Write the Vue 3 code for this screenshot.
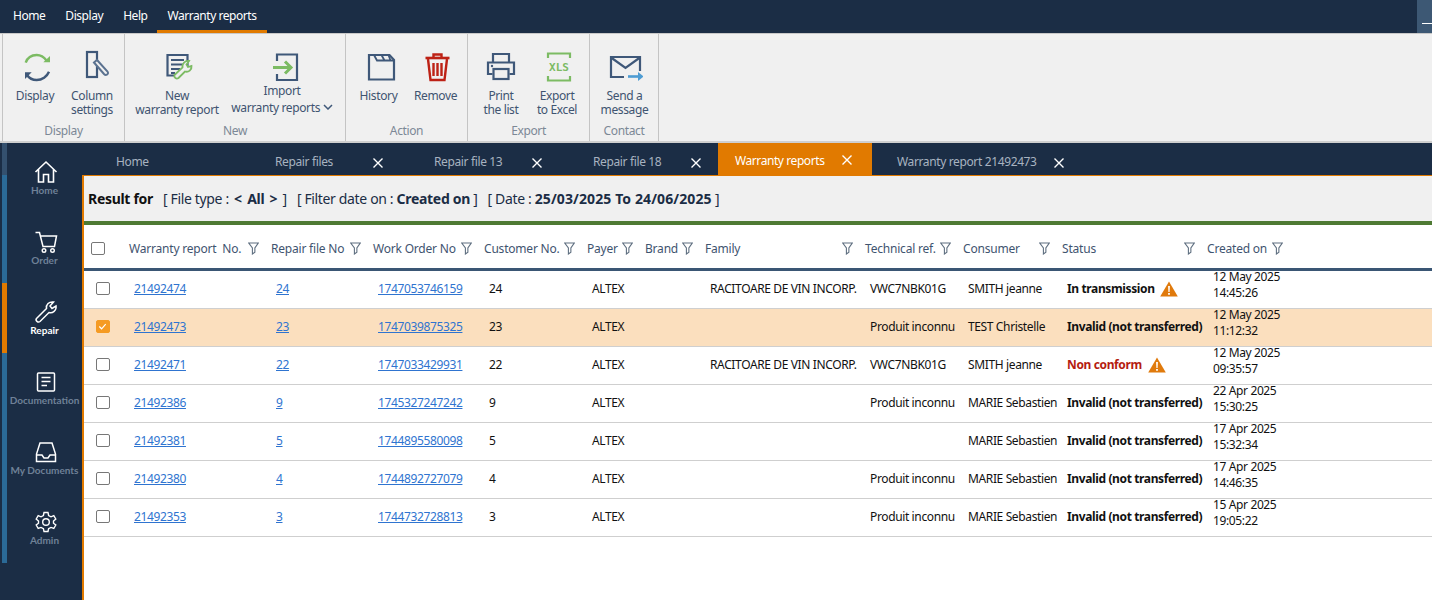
<script setup>
const menu = ['Home', 'Display', 'Help', 'Warranty reports']
const tabs = [
  { t: 'Home', c: 't0' },
  { t: 'Repair files', c: 't1', x: 1 },
  { t: 'Repair file 13', c: 't1', x: 1 },
  { t: 'Repair file 18', c: 't2', x: 1 },
  { t: 'Warranty reports', c: 'ta', x: 1 },
  { t: 'Warranty report 21492473', c: 't3', x: 1 }
]
const heads = [
  { t: 'Warranty report  No.', c: '' }, { t: 'Repair file No', c: '' }, { t: 'Work Order No', c: '' },
  { t: 'Customer No.', c: '' }, { t: 'Payer', c: '' }, { t: 'Brand', c: '' }, { t: 'Family', c: '' },
  { t: 'Technical ref.', c: '' }, { t: 'Consumer', c: '' }, { t: 'Status', c: '' }, { t: 'Created on', c: 'last' }
]
const U = 'Produit inconnu'
const I = 'Invalid (not transferred)'
const R = 'RACITOARE DE VIN INCORP.'
const V = 'VWC7NBK01G'
const rows = [
  ['21492474', '24', '1747053746159', R, V, 'SMITH jeanne', 'In transmission', '12 May 2025', '14:45:26', 'warn'],
  ['21492473', '23', '1747039875325', '', U, 'TEST Christelle', I, '12 May 2025', '11:12:32', 'sel'],
  ['21492471', '22', '1747033429931', R, V, 'SMITH jeanne', 'Non conform', '12 May 2025', '09:35:57', 'bad'],
  ['21492386', '9', '1745327247242', '', U, 'MARIE Sebastien', I, '22 Apr 2025', '15:30:25', ''],
  ['21492381', '5', '1744895580098', '', '', 'MARIE Sebastien', I, '17 Apr 2025', '15:32:34', ''],
  ['21492380', '4', '1744892727079', '', U, 'MARIE Sebastien', I, '17 Apr 2025', '14:46:35', ''],
  ['21492353', '3', '1744732728813', '', U, 'MARIE Sebastien', I, '15 Apr 2025', '19:05:22', '']
]
</script>

<template>
  <div class="app">
    <header class="menubar">
      <span v-for="m in menu" :key="m" class="menu-item" :class="{ on: m === 'Warranty reports' }">{{ m }}</span>
      <span class="corner"><i></i></span>
    </header>

    <section class="ribbon">
      <div class="group g1">
        <div class="btns">
          <div class="btn w56">
            <svg class="ic" viewBox="0 0 36 36" fill="none">
              <path d="M8.700 14.700C10.500 9.500 15 7 19.700 7C24 7 27 9 29.500 12.500" stroke="#7cbb63" stroke-width="2.400"/>
              <path d="M33 8V14.300H26.300Z" fill="#7cbb63"/>
              <path d="M32 23.700C30 28.500 25 32 19.700 32C15.500 32 12 30 10 27" stroke="#3f5879" stroke-width="2.400"/>
              <path d="M8 31V24.300H14.700Z" fill="#3f5879"/>
            </svg>
            <span>Display</span>
          </div>
          <div class="btn w56 col">
            <svg class="ic" viewBox="0 0 36 36" fill="none">
              <rect x="13" y="4" width="10" height="25" stroke="#3f5879" stroke-width="2.200"/>
              <path d="M20 14.500L23 12L33.500 23.500C34.500 25 34 26 33 26.500C32 27.200 31 27 30 26Z" fill="#f0f0f0" stroke="#5b7290" stroke-width="2"/>
            </svg>
            <span>Column<br>settings</span>
          </div>
        </div>
        <div class="glabel">Display</div>
      </div>
      <div class="group g2">
        <div class="btns">
          <div class="btn new">
            <svg class="ic" viewBox="0 0 36 36" fill="none">
              <path d="M28.500 20V7H8.500V27.500H17" stroke="#3f5879" stroke-width="2.200"/>
              <path d="M12 12H25M12 16.500H25M12 21H21M12 25H16" stroke="#3f5879" stroke-width="1.800"/>
              <path d="M15.500 27L23.500 19.500C23 15.500 26 12.500 30 13L27.500 16.500L29 19L32.500 18C33 22 29.500 24.500 26 23.500L19.500 30C17.500 31.500 14.500 29.500 15.500 27Z" fill="#f0f0f0" stroke="#7cbb63" stroke-width="1.800"/>
            </svg>
            <span>New<br>warranty report</span>
          </div>
          <div class="btn imp">
            <svg class="ic" viewBox="0 0 36 36" fill="none">
              <path d="M13 13V6.500H33V32H13V26" stroke="#3f5879" stroke-width="2.200"/>
              <path d="M9 19.500H25" stroke="#7cbb63" stroke-width="3"/>
              <path d="M21 13.500L27 19.500L21 25.500" stroke="#7cbb63" stroke-width="3"/>
            </svg>
            <span>Import<br>warranty reports
              <svg class="chev" viewBox="0 0 10 6" fill="none"><path d="M1 1L5 5L9 1" stroke="#3f5879" stroke-width="1.500"/></svg>
            </span>
          </div>
        </div>
        <div class="glabel">New</div>
      </div>
      <div class="group g3">
        <div class="btns">
          <div class="btn w57">
            <svg class="ic" viewBox="0 0 36 36" fill="none">
              <path d="M8 31.500V7H28.500L33 12V31.500Z" stroke="#3f5879" stroke-width="2.200"/>
              <path d="M13 7L16 12.500H33M20.500 7L23.500 12.500M27.500 7L29.500 12.500" stroke="#3f5879" stroke-width="1.800"/>
            </svg>
            <span>History</span>
          </div>
          <div class="btn w57">
            <svg class="ic" viewBox="0 0 36 36" fill="none">
              <g transform="translate(1.500 0)">
                <path d="M6 10H30" stroke="#bd2115" stroke-width="2.600"/>
                <path d="M14 9V6.500H22V9" stroke="#bd2115" stroke-width="2.400"/>
                <path d="M8.500 11L11 32H25L27.500 11" stroke="#bd2115" stroke-width="2.400"/>
                <path d="M14 15V28M18 15V28M22 15V28" stroke="#bd2115" stroke-width="2.400"/>
              </g>
            </svg>
            <span>Remove</span>
          </div>
        </div>
        <div class="glabel">Action</div>
      </div>
      <div class="group g4">
        <div class="btns">
          <div class="btn w56">
            <svg class="ic" viewBox="0 0 36 36" fill="none">
              <path d="M10 14V6H26V14M9.500 26H5V14.500H31V26H26.500" stroke="#3f5879" stroke-width="2.200"/>
              <rect x="10.500" y="21" width="15" height="10" stroke="#3f5879" stroke-width="2.200"/>
              <circle cx="9" cy="18" r="1.200" fill="#3f5879"/>
            </svg>
            <span>Print<br>the list</span>
          </div>
          <div class="btn w56">
            <svg class="ic" viewBox="0 0 36 36" fill="none">
              <path d="M9 10V5.500H31V10M9 28V32.500H31V28" stroke="#7cbb63" stroke-width="2.200"/>
              <text x="20" y="23" text-anchor="middle" class="xls">XLS</text>
            </svg>
            <span>Export<br>to Excel</span>
          </div>
        </div>
        <div class="glabel">Export</div>
      </div>
      <div class="group g5">
        <div class="btns">
          <div class="btn w68">
            <svg class="ic" viewBox="0 0 36 36" fill="none">
              <path d="M17 29H4V9H33V23" stroke="#3f5879" stroke-width="2.200"/>
              <path d="M4 9.500L18.500 20L33 9.500" stroke="#3f5879" stroke-width="2.200"/>
              <path d="M21 28.500H33" stroke="#4d9cd3" stroke-width="2.600"/>
              <path d="M31 24L36.500 28.500L31 33Z" fill="#4d9cd3"/>
            </svg>
            <span>Send a<br>message</span>
          </div>
        </div>
        <div class="glabel">Contact</div>
      </div>
    </section>

    <div class="body">
      <div class="rail">
        <div class="strip"><i class="s-top"></i><i class="s-blue"></i><i class="s-or"></i><i class="s-low"></i></div>
      </div>
      <nav class="side">
        <div class="nav">
          <svg viewBox="0 0 24 24" fill="none"><path d="M1.500 12L12 2L22.500 12M4.500 9.500V22H9.500V14.500H14.500V22H19.500V9.500" stroke="#fff" stroke-width="1.600"/></svg>
          <span>Home</span>
        </div>
        <div class="nav">
          <svg viewBox="0 0 24 24" fill="none"><path d="M1.500 2.500H5.500L9 16.500H20.500L22.500 6H6.500" stroke="#fff" stroke-width="1.500"/><circle cx="10" cy="20.500" r="1.800" stroke="#fff" stroke-width="1.400"/><circle cx="18.500" cy="20.500" r="1.800" stroke="#fff" stroke-width="1.400"/></svg>
          <span>Order</span>
        </div>
        <div class="nav on">
          <svg viewBox="0 0 24 24" fill="none"><path d="M2.500 18.500L12.500 8.500C11.800 4.500 15 1.500 19.500 2L16 6L18 8.500L22 6C22.800 10.500 18.500 13.500 15 12.500L6 21.500C4 23 1 20.500 2.500 18.500Z" stroke="#fff" stroke-width="1.500"/></svg>
          <span>Repair</span>
        </div>
        <div class="nav">
          <svg viewBox="0 0 24 24" fill="none"><rect x="3.500" y="3" width="17" height="18" rx="1" stroke="#fff" stroke-width="1.500"/><path d="M7.500 7.500H16.500M7.500 11.500H16.500M7.500 15.500H13" stroke="#fff" stroke-width="1.500"/></svg>
          <span>Documentation</span>
        </div>
        <div class="nav">
          <svg viewBox="0 0 24 24" fill="none"><path d="M6 3H18L21.500 14V21.500H2.500V14Z" stroke="#fff" stroke-width="1.500"/><path d="M2.500 15H8L10 18H14L16 15H21.500" stroke="#fff" stroke-width="1.500"/></svg>
          <span>My Documents</span>
        </div>
        <div class="nav">
          <svg viewBox="0 0 24 24" fill="none"><path d="M10 2.500H14L14.600 5.500L17 6.800L19.800 5.600L21.800 9L19.500 11V13.200L21.800 15L19.800 18.500L17 17.400L14.600 18.700L14 21.500H10L9.400 18.700L7 17.400L4.200 18.500L2.200 15L4.500 13.200V11L2.200 9L4.200 5.600L7 6.800L9.400 5.500Z" stroke="#fff" stroke-width="1.400"/><circle cx="12" cy="12" r="3.300" stroke="#fff" stroke-width="1.400"/></svg>
          <span>Admin</span>
        </div>
      </nav>

      <main class="content">
        <div class="tabs">
          <div v-for="t in tabs" :key="t.t" class="tab" :class="t.c">
            <span>{{ t.t }}</span>
            <svg v-if="t.x" class="x" viewBox="0 0 10 10" fill="none"><path d="M.5 .5L9.500 9.500M9.500 .5L.5 9.500" stroke="#fff" stroke-width="1.400"/></svg>
          </div>
        </div>
        <div class="filter">
          <b class="rf">Result for</b>
          <span>[ File type : <b class="wd">&lt; All &gt;</b> ]</span>
          <span>[ Filter date on : <b>Created on</b> ]</span>
          <span>[ Date : <b class="dt">25/03/2025 To 24/06/2025</b> ]</span>
        </div>
        <div class="thead grid">
          <div class="cb-cell"><i class="cb"></i></div>
          <div v-for="h in heads" :key="h.t" class="th" :class="h.c">
            <span>{{ h.t }}</span>
            <svg viewBox="0 0 12 14" fill="none"><path d="M.8 1H11.200L7.500 6.500V11L4.800 13V6.500Z" stroke="#5f6f80" stroke-width="1.200"/></svg>
          </div>
        </div>
        <div v-for="r in rows" :key="r[0]" class="row grid" :class="{ sel: r[9] === 'sel' }">
          <div class="cb-cell"><i class="cb" :class="{ chk: r[9] === 'sel' }"><svg v-if="r[9] === 'sel'" viewBox="0 0 12 12" fill="none"><path d="M2.500 6L5 8.500L9.500 3.500" stroke="#fff" stroke-width="1.300"/></svg></i></div>
          <div class="td"><a>{{ r[0] }}</a></div>
          <div class="td"><a>{{ r[1] }}</a></div>
          <div class="td"><a>{{ r[2] }}</a></div>
          <div class="td">{{ r[1] }}</div>
          <div class="td">ALTEX</div>
          <div class="td"></div>
          <div class="td">{{ r[3] }}</div>
          <div class="td">{{ r[4] }}</div>
          <div class="td">{{ r[5] }}</div>
          <div class="td status" :class="{ red: r[9] === 'bad', tight: r[9] === 'warn' }">
            <span>{{ r[6] }}</span>
            <svg v-if="r[9] === 'warn' || r[9] === 'bad'" viewBox="0 0 18 16"><path d="M9 .5L17.800 15.500H.2Z" fill="#e07a0c"/><path d="M8.100 5H9.900L9.600 11H8.400ZM8.100 12H9.900V13.700H8.100Z" fill="#fff"/></svg>
          </div>
          <div class="td date">{{ r[7] }}<br>{{ r[8] }}</div>
        </div>
      </main>
    </div>
  </div>
</template>

<style>
html, body { margin: 0; background: #fff; overflow: hidden; }
</style>

<style scoped>
.app { width: 1432px; height: 600px; overflow: hidden; display: flex; flex-direction: column; font-family: "Noto Sans", "Open Sans", sans-serif; font-size: 12px; letter-spacing: -.37px; color: #111; }
.menubar { height: 33px; background: #1b2d45; display: flex; padding-left: 3px; color: #fff; flex: none; letter-spacing: -.45px; }
.menu-item { padding: 0 10px; line-height: 32px; height: 33px; box-sizing: border-box; }
.menu-item.on { border-bottom: 3px solid #e17a00; }
.corner { margin-left: auto; width: 15px; background: #3d5874; display: block; padding-top: 23px; box-sizing: border-box; }
.corner i { display: block; width: 10px; height: 1px; background: #fff; margin-left: 5px; }
.ribbon { height: 110px; flex: none; box-sizing: border-box; background: #f0f0f0; border-top: 1px solid #c8c8c8; border-bottom: 2px solid #cfcfcf; display: flex; padding-left: 2px; }
.group { border-right: 1px solid #c4c4c4; display: flex; flex-direction: column; box-sizing: border-box; }
.g1 { width: 123px; border-left: 1px solid #c4c4c4; }
.g2 { width: 221px; }
.g3 { width: 122px; }
.g4 { width: 122px; }
.g5 { width: 69px; }
.btns { display: flex; height: 90px; }
.g1 .btns { padding-left: 4px; }
.g1 .col { margin-left: 1px; }
.g3 .btns { padding-left: 4px; }
.g4 .btns { padding-left: 5px; }
.g5 .btns { padding-left: 1px; }
.btn { display: flex; flex-direction: column; align-items: center; text-align: center; color: #3f5470; line-height: 14px; white-space: nowrap; }
.w56 { width: 56px; }
.w57 { width: 57px; }
.w68 { width: 67px; }
.new { width: 100px; margin-left: 2px; }
.imp { width: 110px; }
.btn .ic { width: 36px; height: 36px; margin-top: 14px; margin-bottom: 4px; flex: none; }
.btn > span { padding-top: 1px; line-height: 14px; margin-top: -1px; transform: translateY(1px); }
.imp > span { margin-top: -8px; line-height: 17px; }
.chev { width: 10px; height: 6px; vertical-align: 2px; }
.xls { font: 700 11px "DejaVu Sans Mono", monospace; fill: #7cbb63; letter-spacing: 0; }
.glabel { text-align: center; color: #7c8896; line-height: 16px; margin-top: -1px; }
.body { flex: 1; display: flex; min-height: 0; background: #1b2d45; }
.rail { width: 7px; flex: none; padding-left: 2px; box-sizing: border-box; }
.strip { width: 5px; display: flex; flex-direction: column; }
.strip i { display: block; }
.s-top { height: 32px; background: #34506e; }
.s-blue { height: 108px; background: #2b6a97; }
.s-or { height: 70px; background: #e17a00; }
.s-low { height: 210px; background: #2b6a97; }
.side { width: 75px; flex: none; display: flex; flex-direction: column; padding-top: 17px; box-sizing: border-box; }
.nav { height: 70px; display: flex; flex-direction: column; align-items: center; font: 700 10px/12px Lato, sans-serif; letter-spacing: 0; color: #6f8197; white-space: nowrap; }
.nav svg { width: 24px; height: 24px; margin-left: 3px; }
.nav.on { color: #fff; }
.content { flex: 1; min-width: 0; background: #fff; border-left: 2px solid #e17a00; display: flex; flex-direction: column; }
.tabs { height: 33px; flex: none; box-sizing: border-box; background: #1b2d45; border-bottom: 1px solid #e17a00; margin-left: -2px; display: flex; color: #a8b3c0; }
.tab { display: flex; align-items: center; height: 32px; box-sizing: border-box; position: relative; padding-top: 5px; }
.tab .x { position: absolute; width: 10px; height: 10px; top: 15px; }
.t0 { width: 159px; padding-left: 32px; margin-left: 2px; }
.t1 { width: 159px; padding-left: 32px; }
.t2 { width: 157px; padding-left: 32px; }
.t1 .x, .t2 .x { left: 130px; }
.ta { width: 154px; padding-left: 17px; background: #e17a00; color: #fff; padding-top: 3px; letter-spacing: -.42px; }
.ta .x { left: 124px; top: 12px; }
.t3 { padding-left: 25px; width: 300px; }
.t3 .x { left: 182px; }
.filter { height: 45px; flex: none; box-sizing: border-box; background: #f0f0f0; display: flex; gap: 10px; align-items: center; padding-left: 4px; font-size: 14px; letter-spacing: -.35px; color: #1b2d45; white-space: pre; }
.filter b { letter-spacing: -.3px; }
.filter .dt { letter-spacing: .1px; }
.filter .wd { padding: 0 2px; word-spacing: 2px; }
.filter .rf { color: #111; }
.grid { display: grid; grid-template-columns: 45px 142px 102px 111px 103px 58px 60px 160px 98px 99px 145px 1fr; }
.thead { height: 50px; flex: none; box-sizing: border-box; border-top: 4px solid #4e7a33; border-bottom: 3px solid #3a5674; padding-top: 3px; align-items: center; color: #3f5470; letter-spacing: -.2px; }
.th { display: flex; justify-content: space-between; align-items: center; padding-right: 12px; white-space: pre; min-width: 0; }
.th.last { justify-content: flex-start; gap: 5px; padding-right: 0; }
.th svg { width: 11px; height: 13px; flex: none; }
.cb-cell { display: flex; padding-left: 7px; }
.cb { display: block; width: 14px; height: 13px; box-sizing: border-box; border: 1.500px solid #777; border-radius: 2px; background: #fff; }
.row .cb-cell { padding-left: 12px; }
.cb.chk { background: #f59b23; border-color: #f59b23; }
.cb svg { display: block; width: 11px; height: 11px; }
.row { height: 38px; box-sizing: border-box; border-bottom: 1px solid #cfcfcf; align-items: center; padding-bottom: 2px; }
.row.sel { background: #fbdfbe; }
.td { padding-left: 5px; white-space: nowrap; }
.td a { color: #2f74d0; text-decoration: underline; }
.status { display: flex; align-items: center; gap: 6px; font-weight: 700; }
.status.tight { gap: 5px; }
.status svg { width: 18px; height: 16px; flex: none; }
.status.red { color: #b51c10; }
.date { line-height: 16px; padding-left: 6px; margin-top: -8px; }
</style>
